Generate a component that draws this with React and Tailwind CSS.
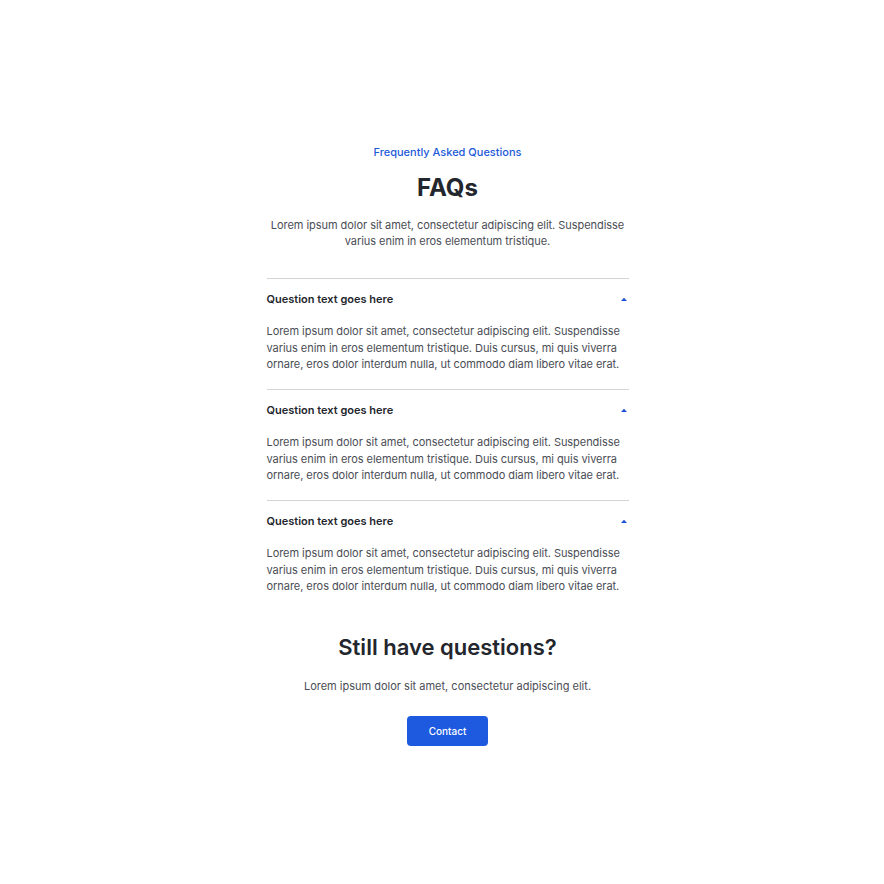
const faqs = [
  'Question text goes here',
  'Question text goes here',
  'Question text goes here',
]

const answer =
  'Lorem ipsum dolor sit amet, consectetur adipiscing elit. Suspendisse varius enim in eros elementum tristique. Duis cursus, mi quis viverra ornare, eros dolor interdum nulla, ut commodo diam libero vitae erat.'

function Caret() {
  return (
    <svg width="6" height="4" viewBox="0 0 6 4" className="shrink-0 mr-[2px]">
      <path d="M0 4 L3 0.8 L6 4 Z" fill="#1d4ed8" />
    </svg>
  )
}

function FaqItem({ question }) {
  return (
    <div className="border-t border-[#d4d4d4]">
      <div className="flex items-center justify-between pt-[12px] pb-[16px]">
        <p className="text-[11px] font-semibold text-[#23262d]">{question}</p>
        <Caret />
      </div>
      <p className="text-[11px] leading-[16.5px] text-[#4a4d55] pb-[16px] tracking-[-0.05px]">{answer}</p>
    </div>
  )
}

export default function App() {
  return (
    <div className="min-h-[884px] bg-white flex justify-center pl-[11px]" style={{ fontFamily: 'Inter, "Noto Sans", sans-serif' }}>
      <div className="w-[362px] pt-[144px] flex flex-col items-center">
        <p className="text-[11px] font-medium text-[#1d5bd8]">Frequently Asked Questions</p>
        <h1 className="mt-[12px] text-[24px] leading-[30px] font-bold text-[#23262d]">FAQs</h1>
        <p className="mt-[14px] text-[11px] leading-[16.5px] text-[#4a4d55] text-center tracking-[-0.05px]">
          Lorem ipsum dolor sit amet, consectetur adipiscing elit. Suspendisse varius enim in eros elementum tristique.
        </p>
        <div className="mt-[28px] w-full">
          {faqs.map((q, i) => (
            <FaqItem key={i} question={q} />
          ))}
        </div>
        <h2 className="mt-[22px] text-[22px] leading-[28px] font-semibold text-[#23262d]">Still have questions?</h2>
        <p className="mt-[17px] text-[11px] text-[#4a4d55]">Lorem ipsum dolor sit amet, consectetur adipiscing elit.</p>
        <button className="mt-[22px] w-[81px] h-[30px] rounded-[4px] bg-[#1d5ae0] text-white text-[10px] font-medium">
          Contact
        </button>
      </div>
    </div>
  )
}
